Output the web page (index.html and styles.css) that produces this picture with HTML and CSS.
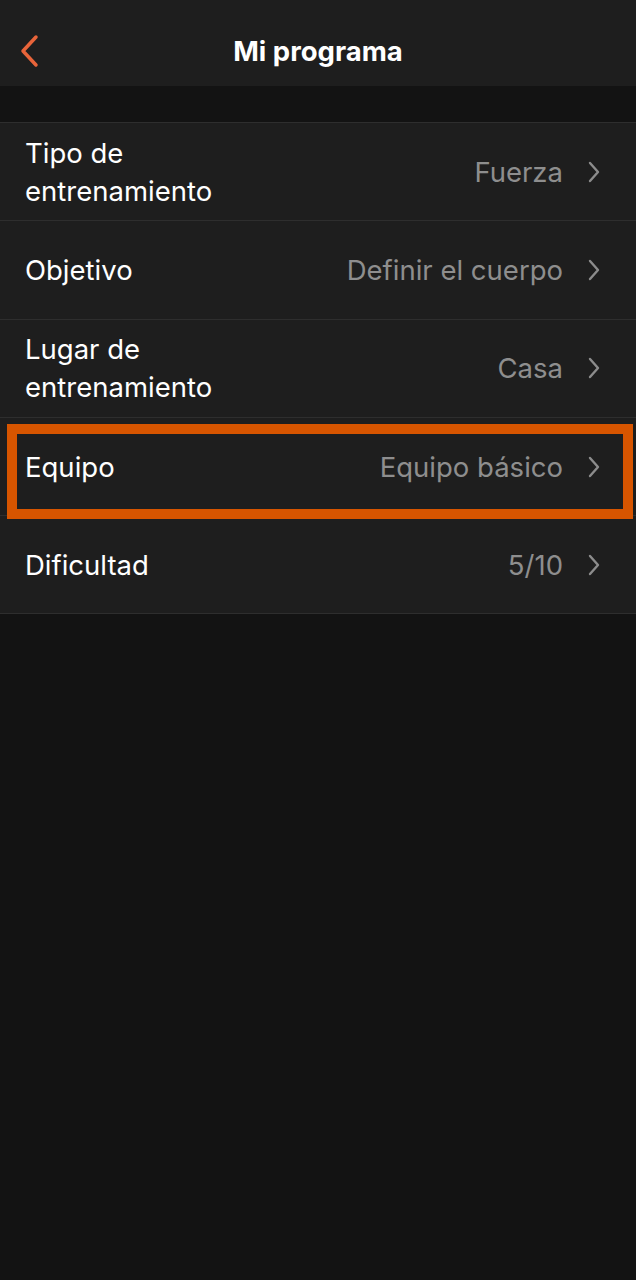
FILE: index.html
```html
<!DOCTYPE html>
<html>
<head>
  <title>Mi programa</title>
  <link rel="stylesheet" href="styles.css">
</head>
<body>
  <header class="topbar">
    <a class="back" href="#">
      <svg width="22" height="34" viewBox="0 0 22 34"><path d="M18 3 L5 17 L18 31" fill="none" stroke="#e8643a" stroke-width="3.5" stroke-linecap="round" stroke-linejoin="round"/></svg>
    </a>
    <h1>Mi programa</h1>
  </header>

  <div class="spacer"></div>

  <ul class="settings">
    <li class="row">
      <span class="label">Tipo de<br>entrenamiento</span>
      <span class="value">Fuerza</span>
      <svg class="chev" width="14" height="24" viewBox="0 0 14 24"><path d="M3 3 L11 12 L3 21" fill="none" stroke="#8c8c8c" stroke-width="2.4" stroke-linecap="round" stroke-linejoin="round"/></svg>
    </li>
    <li class="row">
      <span class="label">Objetivo</span>
      <span class="value">Definir el cuerpo</span>
      <svg class="chev" width="14" height="24" viewBox="0 0 14 24"><path d="M3 3 L11 12 L3 21" fill="none" stroke="#8c8c8c" stroke-width="2.4" stroke-linecap="round" stroke-linejoin="round"/></svg>
    </li>
    <li class="row">
      <span class="label">Lugar de<br>entrenamiento</span>
      <span class="value">Casa</span>
      <svg class="chev" width="14" height="24" viewBox="0 0 14 24"><path d="M3 3 L11 12 L3 21" fill="none" stroke="#8c8c8c" stroke-width="2.4" stroke-linecap="round" stroke-linejoin="round"/></svg>
    </li>
    <li class="row highlighted">
      <span class="label">Equipo</span>
      <span class="value">Equipo básico</span>
      <svg class="chev" width="14" height="24" viewBox="0 0 14 24"><path d="M3 3 L11 12 L3 21" fill="none" stroke="#8c8c8c" stroke-width="2.4" stroke-linecap="round" stroke-linejoin="round"/></svg>
      <div class="mark"></div>
    </li>
    <li class="row">
      <span class="label">Dificultad</span>
      <span class="value">5/10</span>
      <svg class="chev" width="14" height="24" viewBox="0 0 14 24"><path d="M3 3 L11 12 L3 21" fill="none" stroke="#8c8c8c" stroke-width="2.4" stroke-linecap="round" stroke-linejoin="round"/></svg>
    </li>
  </ul>
</body>
</html>
```

FILE: styles.css
```css
body {
  margin: 0;
  padding: 0;
  font-family: Inter, "Noto Sans", sans-serif;
  background-color: #131313;
  color: #ffffff;
  min-height: 1280px;
}
.topbar {
  height: 86px;
  box-sizing: border-box;
  padding-top: 15px;
  background-color: #1e1e1e;
  display: flex;
  align-items: center;
  justify-content: center;
  position: relative;
}
.topbar h1 {
  margin: 0;
  font-size: 27.5px;
  font-weight: 700;
}
.back {
  position: absolute;
  left: 18px;
  top: 34px;
  display: flex;
}
.spacer {
  height: 36px;
}
.settings {
  list-style: none;
  margin: 0;
  padding: 0;
  border-bottom: 1px solid #2e2e2e;
}
.row {
  height: 97.3px;
  border-top: 1px solid #2e2e2e;
  background-color: #1e1e1e;
  display: flex;
  align-items: center;
  padding: 0 35px 0 25px;
  font-size: 27.5px;
  position: relative;
}
.label {
  flex: 1;
  line-height: 38px;
}
.value {
  color: #8e8e8e;
  margin-right: 24px;
}
.chev {
  display: block;
}
.mark {
  position: absolute;
  z-index: 1;
  left: 7px;
  right: 3px;
  top: 6px;
  height: 75px;
  border: 10px solid #d75500;
}
```
